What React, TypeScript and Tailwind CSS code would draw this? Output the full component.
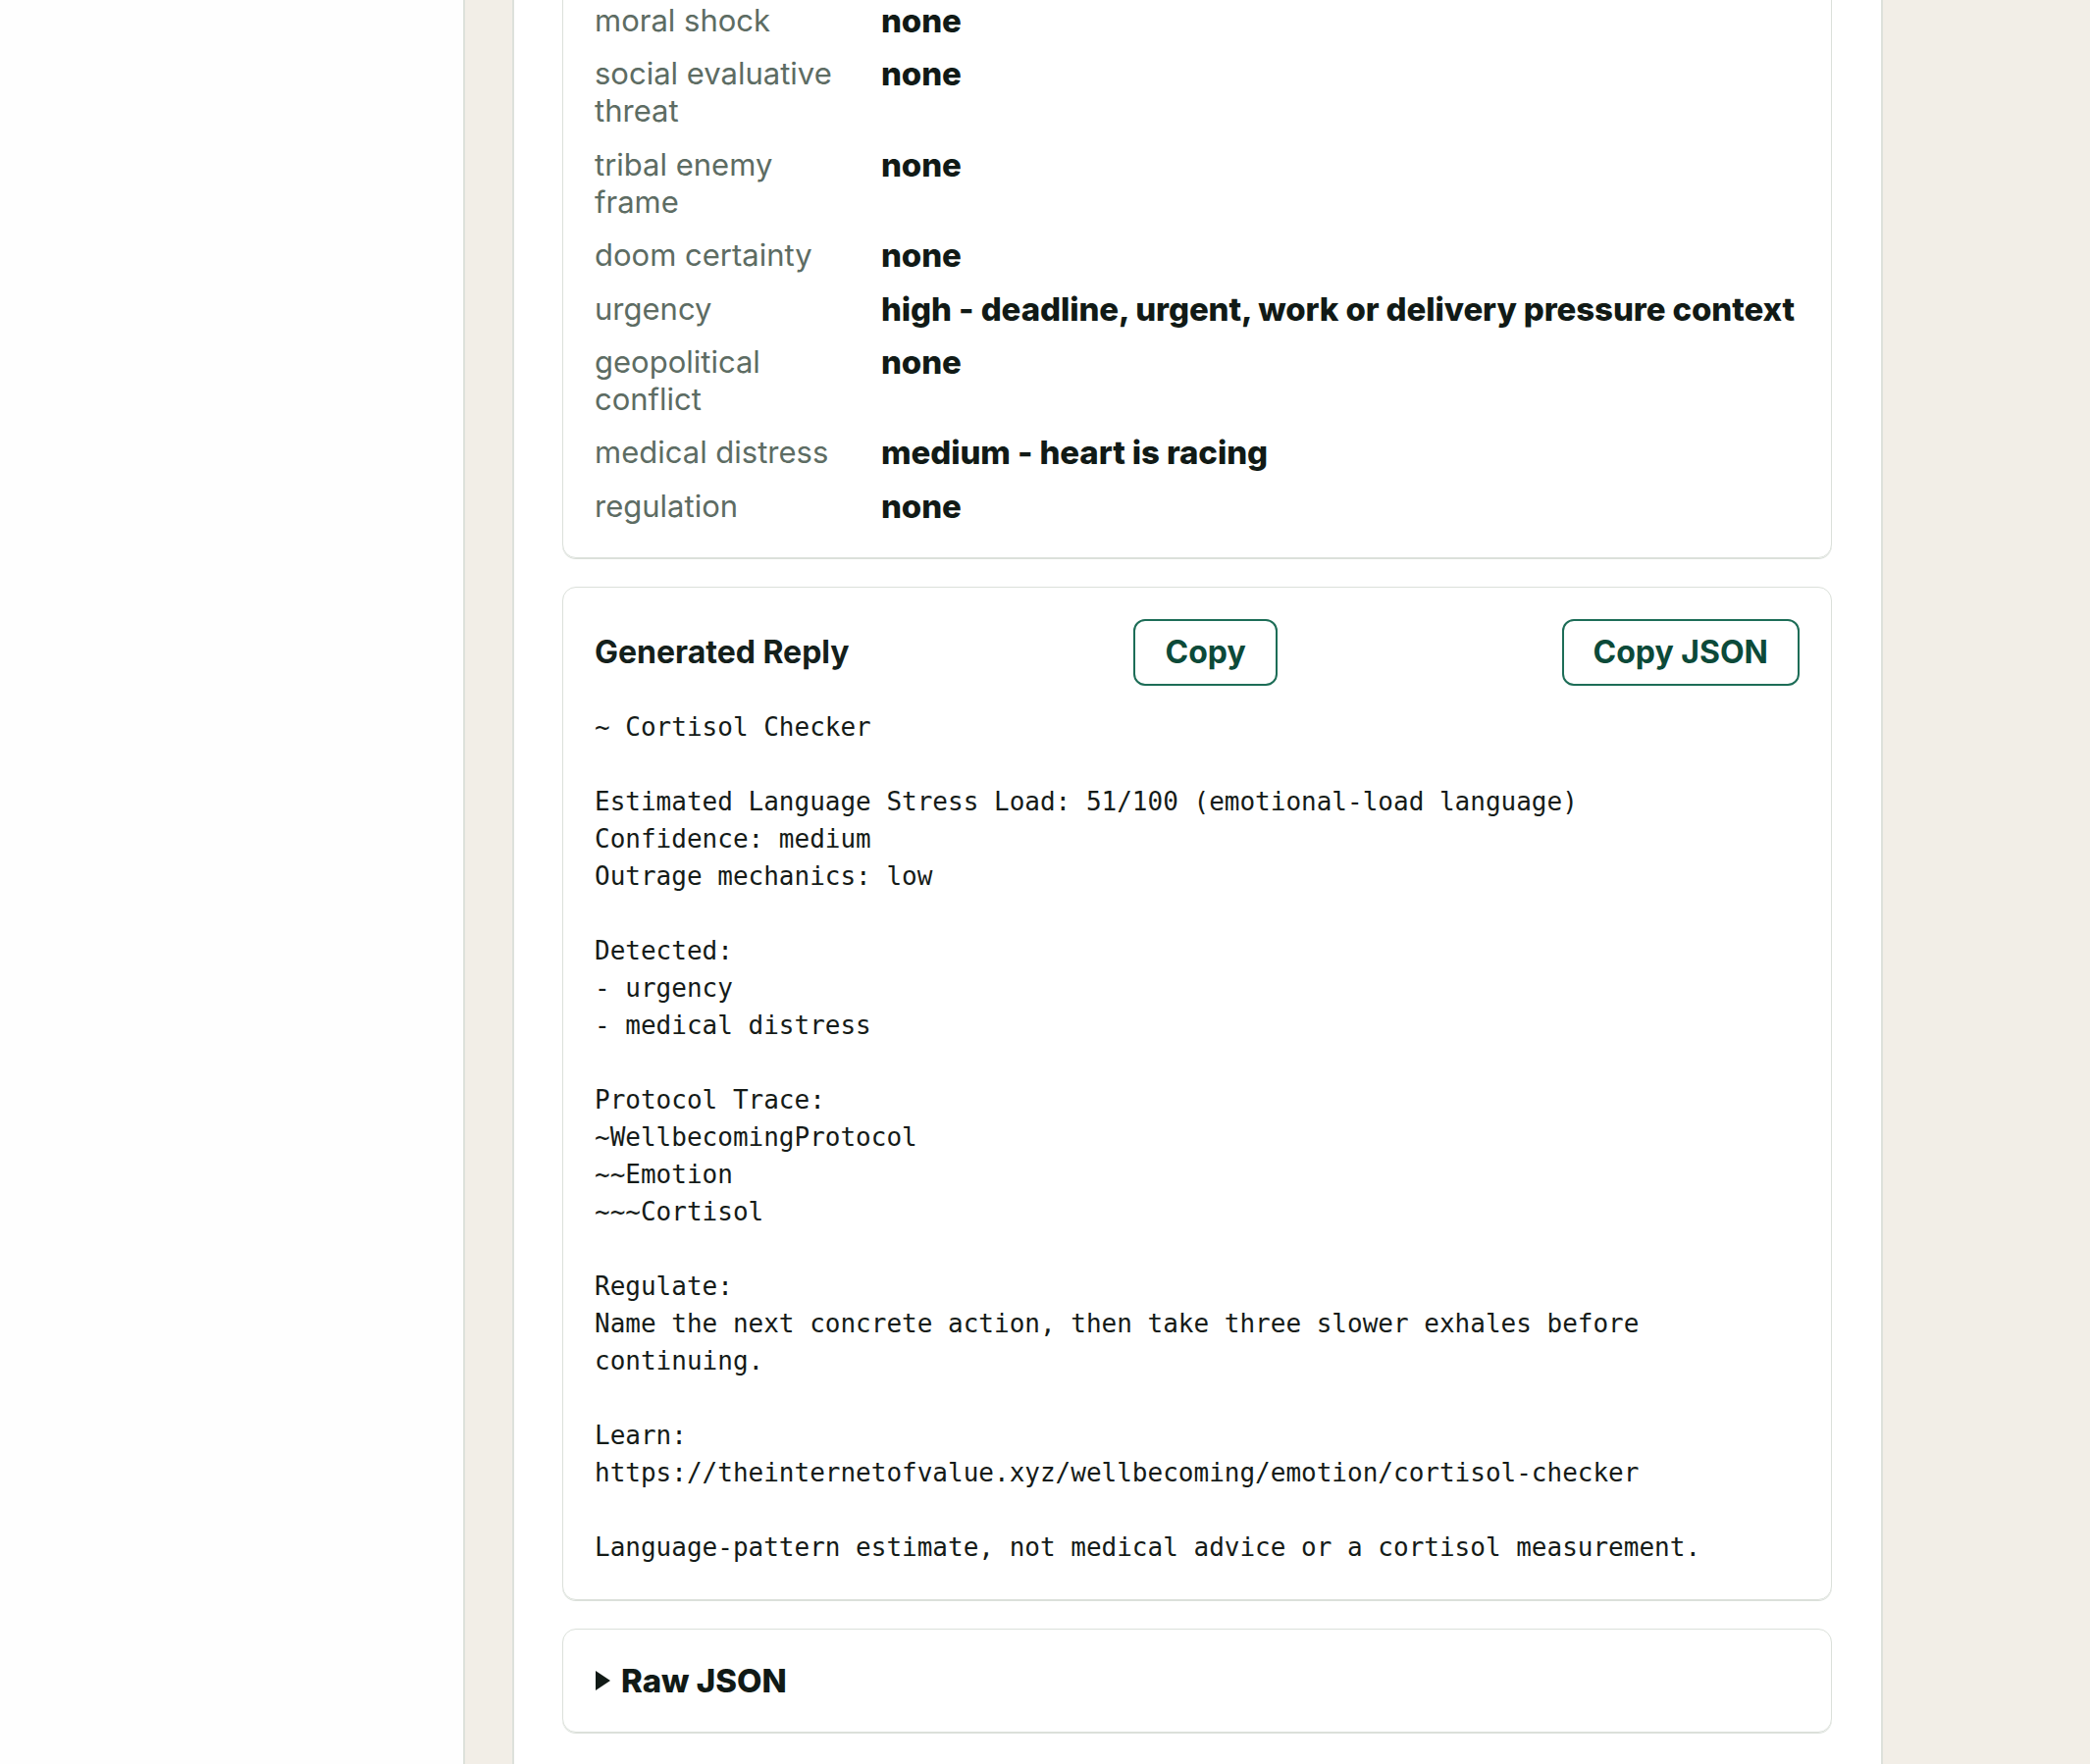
import React from "react";

const rows: { label: string; value: string }[] = [
  { label: "moral shock", value: "none" },
  { label: "social evaluative threat", value: "none" },
  { label: "tribal enemy frame", value: "none" },
  { label: "doom certainty", value: "none" },
  { label: "urgency", value: "high - deadline, urgent, work or delivery pressure context" },
  { label: "geopolitical conflict", value: "none" },
  { label: "medical distress", value: "medium - heart is racing" },
  { label: "regulation", value: "none" },
];

const reply = `~ Cortisol Checker

Estimated Language Stress Load: 51/100 (emotional-load language)
Confidence: medium
Outrage mechanics: low

Detected:
- urgency
- medical distress

Protocol Trace:
~WellbecomingProtocol
~~Emotion
~~~Cortisol

Regulate:
Name the next concrete action, then take three slower exhales before continuing.

Learn:
https://theinternetofvalue.xyz/wellbecoming/emotion/cortisol-checker

Language-pattern estimate, not medical advice or a cortisol measurement.`;

export default function App() {
  return (
    <div
      className="flex h-[1798px] w-full overflow-hidden bg-[#f2eee7]"
      style={{ fontFamily: "Inter, 'Noto Sans', sans-serif" }}
    >
      {/* left blank page area */}
      <div className="w-[474px] shrink-0 bg-[#fefefe] border-r-2 border-[#dde1db]" />
      <div className="w-[50px] shrink-0 border-r-2 border-[#dde1db] bg-[#f2eee7]" />

      {/* main panel */}
      <div className="w-[1395px] shrink-0 border-r-2 border-[#dde1db] bg-white pl-[49px] pr-[50px]">
        <div className="-mt-[31px] flex flex-col gap-[29px]">
          {/* signals card */}
          <div className="rounded-[14px] border border-[#dbe0da] px-8 pt-8 pb-[33px] shadow-[0_1px_0_#dbe0da]">
            <div className="grid grid-cols-[260px_1fr] gap-x-8 gap-y-[16.4px] leading-[38px]">
              {rows.map((r) => (
                <React.Fragment key={r.label}>
                  <div className="text-[31px] text-[#5d6c63]">{r.label}</div>
                  <div className="whitespace-nowrap text-[33px] font-extrabold tracking-[-0.1px] text-[#111a16]">
                    {r.value}
                  </div>
                </React.Fragment>
              ))}
            </div>
          </div>

          {/* generated reply */}
          <div className="rounded-[14px] border border-[#dbe0da] px-8 pt-8 pb-[34px] shadow-[0_1px_0_#dbe0da]">
            <div className="flex items-center justify-between">
              <h3 className="text-[32px] font-bold text-[#14201b]">Generated Reply</h3>
              <button className="h-[68px] rounded-[12px] border-2 border-[#1d6d57] px-[30px] text-[32px] font-bold text-[#0c4a39]">
                Copy
              </button>
              <button className="h-[68px] rounded-[12px] border-2 border-[#1d6d57] px-[30px] text-[32px] font-bold text-[#0c4a39]">
                Copy JSON
              </button>
            </div>
            <pre
              className="mt-[23px] whitespace-pre-wrap break-words text-[26px] leading-[38px] text-[#151b18]"
              style={{ fontFamily: "'DejaVu Sans Mono', 'Liberation Mono', monospace" }}
            >
              {reply}
            </pre>
          </div>

          {/* raw json */}
          <div className="rounded-[14px] border border-[#dbe0da] p-8 shadow-[0_1px_0_#dbe0da]">
            <div className="flex items-center gap-[10px] text-[33px] font-extrabold leading-[40px] text-[#111a16]">
              <svg width="17" height="22" viewBox="0 0 17 22" className="shrink-0">
                <path d="M1 1 L16 11 L1 21 Z" fill="#111a16" />
              </svg>
              <span>Raw JSON</span>
            </div>
          </div>
        </div>
      </div>

      <div className="flex-1 bg-[#f2eee7]" />
    </div>
  );
}
